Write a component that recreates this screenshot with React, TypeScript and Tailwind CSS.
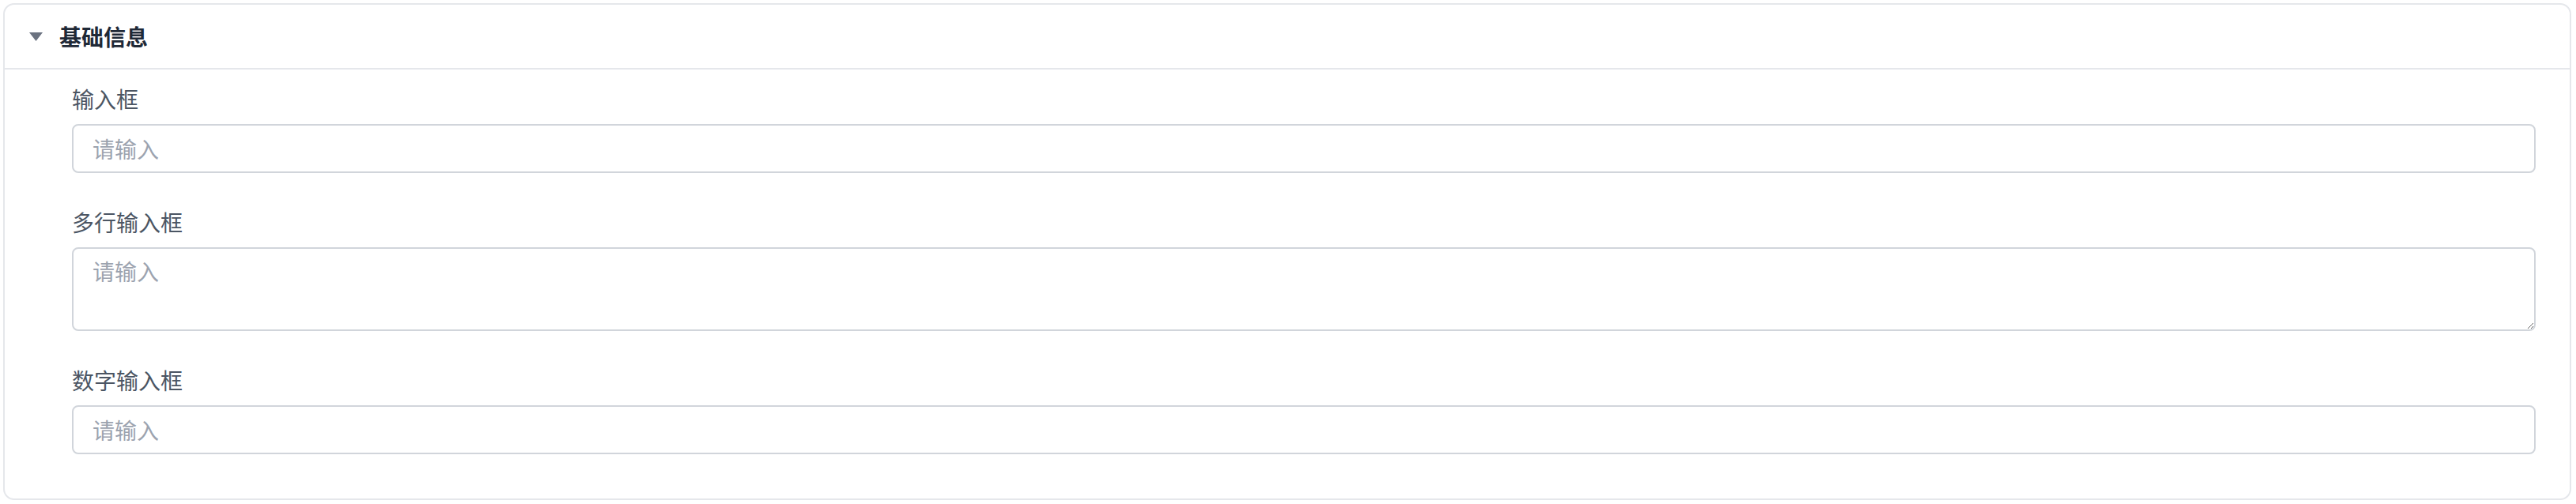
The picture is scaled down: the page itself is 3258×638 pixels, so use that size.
import { useState } from "react";

const font = { fontFamily: '"Noto Sans CJK SC", "Noto Sans", sans-serif' };

interface Field {
  label: string;
  kind: "text" | "textarea" | "number";
}

const fields: Field[] = [
  { label: "输入框", kind: "text" },
  { label: "多行输入框", kind: "textarea" },
  { label: "数字输入框", kind: "number" },
];

export default function App() {
  const [open, setOpen] = useState(true);

  return (
    <div className="min-h-screen bg-white pl-1 pt-1 pr-[6px] pb-[5px]" style={font}>
      <div className="rounded-[14px] border-2 border-[#e5e7eb] bg-white">
        {/* Section header */}
        <button
          type="button"
          onClick={() => setOpen(!open)}
          className="flex h-[80px] w-full items-center gap-[21px] pl-[31px] text-left"
        >
          <svg
            width="17"
            height="11"
            viewBox="0 0 17 11"
            className={open ? "" : "-rotate-90"}
          >
            <path d="M0 0 H17 L8.5 11 Z" fill="#6b7280" />
          </svg>
          <span className="text-[28px] leading-[40px] font-bold text-[#1f2937]">
            基础信息
          </span>
        </button>

        {open && (
          <div className="flex flex-col gap-[42px] border-t-2 border-[#e5e7eb] pl-[85px] pr-[43px] pt-[17px] pb-[56px]">
            {fields.map((f) => (
              <div key={f.label} className="flex flex-col">
                <label className="mb-[12px] text-[28px] leading-[40px] text-[#4b5563]">
                  {f.label}
                </label>
                {f.kind === "textarea" ? (
                  <textarea
                    placeholder="请输入"
                    className="h-[106px] w-full rounded-[8px] border-2 border-[#d1d5db] px-[24px] py-[8px] text-[28px] leading-[40px] text-[#1f2937] outline-none placeholder:text-[#9ca3af]"
                    style={font}
                  />
                ) : (
                  <input
                    type={f.kind}
                    placeholder="请输入"
                    className="h-[62px] w-full rounded-[8px] border-2 border-[#d1d5db] px-[24px] text-[28px] leading-[40px] text-[#1f2937] outline-none placeholder:text-[#9ca3af] [appearance:textfield] [&::-webkit-inner-spin-button]:appearance-none"
                    style={font}
                  />
                )}
              </div>
            ))}
          </div>
        )}
      </div>
    </div>
  );
}
